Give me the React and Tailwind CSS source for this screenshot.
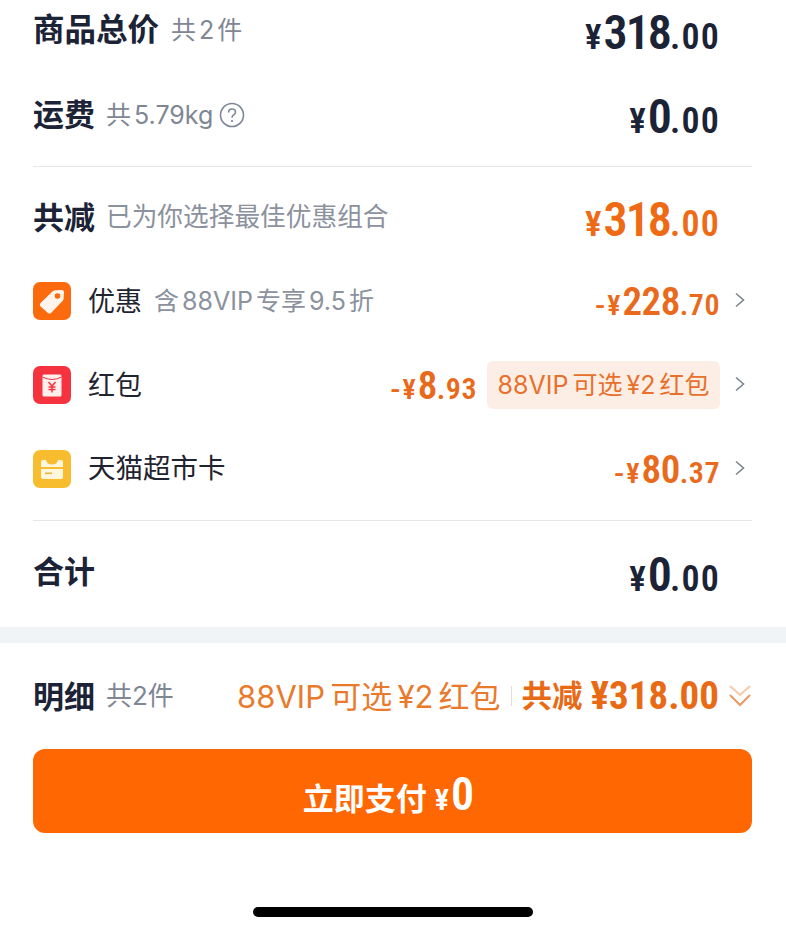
const cjk = "font-['Inter','Noto_Sans_CJK_SC',sans-serif]";
const num = "font-['Roboto','Noto_Sans_CJK_SC',sans-serif]";

function Price({ color, prefix, big, small, bigSize = "text-[48px] tracking-[-2px]", smallSize = "text-[36px] tracking-[1.2px]", yenSize = "text-[35px]" }) {
  return (
    <span className={`${num} ${color} font-semibold flex items-baseline leading-none`}>
      {prefix && <span className={`${yenSize} mr-[2px]`}>{prefix}</span>}
      <span className={`${yenSize} [font-stretch:85%] mr-[2px]`}>¥</span>
      <span className={`${bigSize} [font-stretch:75%]`}>{big}</span>
      <span className={`${smallSize} [font-stretch:75%]`}>{small}</span>
    </span>
  );
}

const rowBig = "text-[39px] tracking-[-0.5px]";
const rowSmall = "text-[30px] tracking-[0.5px]";

function Chevron() {
  return (
    <svg width="12" height="16" viewBox="0 0 12 16" fill="none" className="shrink-0 mr-[6px] -mt-[2px]">
      <path d="M2 1.5 L9.5 8 L2 14.5" stroke="#7d8490" strokeWidth="1.6" />
    </svg>
  );
}

function TagIcon() {
  return (
    <svg width="38" height="38" viewBox="0 0 38 38" className="shrink-0">
      <rect width="38" height="38" rx="7" fill="#fb6a0c" />
      <path d="M7.5 21 L20 9 Q21 8.2 22.5 8.2 L29 8 Q31 8 31 10 L30.6 16.5 Q30.5 18 29.5 19 L18 31 Q16.6 32.2 15 31 L7.5 24.5 Q6 22.6 7.5 21 Z" fill="#fff5ec" />
      <circle cx="24.5" cy="14" r="2.8" fill="#fb6a0c" />
    </svg>
  );
}

function EnvelopeIcon() {
  return (
    <svg width="38" height="38" viewBox="0 0 38 38" className="shrink-0">
      <rect width="38" height="38" rx="7" fill="#f5333f" />
      <path d="M9.5 10 Q9.5 8.5 11 8.5 L27 8.5 Q28.5 8.5 28.5 10 L28.5 29 Q28.5 30.5 27 30.5 L11 30.5 Q9.5 30.5 9.5 29 Z" fill="#fff0ee" />
      <path d="M9.5 11 Q19 16 28.5 11" stroke="#f5333f" strokeWidth="1" fill="none" />
      <path d="M15.5 16 L19 20 L22.5 16 M19 20 L19 26.5 M15.5 21 H22.5 M15.5 23.5 H22.5" stroke="#f5333f" strokeWidth="1.5" fill="none" />
    </svg>
  );
}

function CardIcon() {
  return (
    <svg width="38" height="38" viewBox="0 0 38 38" className="shrink-0">
      <rect width="38" height="38" rx="7" fill="#f8bd2e" />
      <path d="M8 12 Q8 10 10 10 L13 10 Q14 14.5 19 14.5 Q24 14.5 25 10 L28 10 Q30 10 30 12 L30 17 L8 17 Z" fill="#fff6dc" />
      <path d="M8 19 H30 V27 Q30 29 28 29 H10 Q8 29 8 27 Z" fill="#fff6dc" />
      <rect x="12" y="22.5" width="7" height="1.6" fill="#e9b43c" />
    </svg>
  );
}

function Row({ className = "", children }) {
  return <div className={`flex items-center h-[84px] ${className}`}>{children}</div>;
}

export default function App() {
  return (
    <div className={`${cjk} w-[786px] h-[932px] bg-white overflow-hidden flex flex-col`}>
      <div className="pl-[33px] pr-[34px] -mt-[11px] flex flex-col">
        <Row>
          <span className="text-[31.5px] font-bold text-[#1c2336] leading-none -mt-[2px]">商品总价</span>
          <span className="ml-3 text-[25px] text-[#7f8694] leading-none [word-spacing:-4px] -mt-[2px]">共 2 件</span>
          <span className="ml-auto mr-[32px] mt-[3px]"><Price color="text-[#1c2336]" big="318" small=".00" /></span>
        </Row>
        <Row>
          <span className="text-[31px] font-bold text-[#1c2336] leading-none -mt-[2px]">运费</span>
          <span className="ml-[11px] text-[25px] text-[#7f8694] leading-none [word-spacing:-4px]">共 5.79kg</span>
          <svg width="26" height="26" viewBox="0 0 26 26" fill="none" className="ml-[6px]">
            <circle cx="13" cy="13" r="11.5" stroke="#7f8694" strokeWidth="1.6" />
            <path d="M9.5 10.5 Q9.7 7 13 7 Q16.5 7 16.5 10 Q16.5 12 14.5 13 Q13 13.8 13 15.8" stroke="#7f8694" strokeWidth="1.6" />
            <circle cx="13" cy="19" r="1.1" fill="#7f8694" />
          </svg>
          <span className="ml-auto mr-[32px] mt-[3px]"><Price color="text-[#1c2336]" big="0" small=".00" /></span>
        </Row>
        <div className="h-px bg-[#e6e7e9] mt-[9px] mb-[8px]" />
        <Row>
          <span className="text-[31px] font-bold text-[#1c2336] leading-none">共减</span>
          <span className="ml-[11px] text-[25.7px] text-[#8b919d] leading-none">已为你选择最佳优惠组合</span>
          <span className="ml-auto mr-[32px] mt-[5px]"><Price color="text-[#ee6a14]" big="318" small=".00" /></span>
        </Row>
        <Row>
          <TagIcon />
          <span className="ml-[17px] text-[27px] text-[#1f2430] leading-none">优惠</span>
          <span className="ml-3 text-[25px] text-[#8b919d] leading-none [word-spacing:-4px]">含 88VIP 专享 9.5 折</span>
          <span className="ml-auto mr-[14px] mt-[3px]">
            <Price color="text-[#e96a1c]" prefix="-" big="228" small=".70" bigSize={rowBig} smallSize={rowSmall} yenSize="text-[28px]" />
          </span>
          <Chevron />
        </Row>
        <Row>
          <EnvelopeIcon />
          <span className="ml-[17px] text-[27px] text-[#1f2430] leading-none">红包</span>
          <span className="ml-auto mr-[10px] mt-[3px]">
            <Price color="text-[#e96a1c]" prefix="-" big="8" small=".93" bigSize={rowBig} smallSize={rowSmall} yenSize="text-[28px]" />
          </span>
          <span className="mr-[14px] h-[48px] w-[233px] flex items-center justify-center rounded-md bg-[#fdeee5] text-[25px] text-[#e8702a] leading-none [word-spacing:-3px]">88VIP 可选 ¥2 红包</span>
          <Chevron />
        </Row>
        <Row>
          <CardIcon />
          <span className="ml-[17px] text-[27.5px] text-[#1f2430] leading-none">天猫超市卡</span>
          <span className="ml-auto mr-[14px] mt-[3px]">
            <Price color="text-[#e96a1c]" prefix="-" big="80" small=".37" bigSize={rowBig} smallSize={rowSmall} yenSize="text-[28px]" />
          </span>
          <Chevron />
        </Row>
        <div className="h-px bg-[#e6e7e9] mt-[9px] mb-[10px]" />
        <Row>
          <span className="text-[31px] font-bold text-[#1c2336] leading-none -mt-[3px]">合计</span>
          <span className="ml-auto mr-[32px] mt-[3px]"><Price color="text-[#1c2336]" big="0" small=".00" /></span>
        </Row>
      </div>
      <div className="h-4 bg-[#f1f4f7] mt-3" />
      <div className="pl-[33px] pr-[34px] mt-[11px] flex flex-col">
        <Row>
          <span className="text-[31px] font-bold text-[#1c2336] leading-none">明细</span>
          <span className="ml-[11px] text-[26px] text-[#7f8694] leading-none">共2件</span>
          <span className="ml-auto text-[31px] text-[#e97a2c] leading-none [word-spacing:-3.5px]">88VIP 可选 ¥2 红包</span>
          <span className="mx-[10px] w-px h-5 bg-[#e9dcd2]" />
          <span className="text-[30.5px] font-bold text-[#e96a14] leading-none">共减</span>
          <span className={`${num} ml-2 text-[39px] font-bold text-[#e96a14] leading-none [font-stretch:75%]`}>¥318.00</span>
          <svg width="24" height="26" viewBox="0 0 24 26" fill="none" className="ml-[9px] shrink-0">
            <path d="M2 3 L12 12 L22 3" stroke="#f6c9a8" strokeWidth="2" />
            <path d="M2 12 L12 22 L22 12" stroke="#eb9a63" strokeWidth="2" />
          </svg>
        </Row>
        <div className="mt-[11px] h-[84px] rounded-xl bg-[#ff6703] flex items-baseline justify-center text-white pt-[22px] pr-[8px]">
          <span className="text-[31px] font-semibold leading-none">立即支付</span>
          <span className={`${num} ml-2 text-[30px] font-semibold leading-none [font-stretch:80%]`}>¥</span>
          <span className={`${num} text-[46px] font-semibold leading-none ml-[2px] [font-stretch:75%]`}>0</span>
        </div>
      </div>
      <div className="mt-[74px] self-center w-[280px] h-[10px] rounded-full bg-black" />
    </div>
  );
}
